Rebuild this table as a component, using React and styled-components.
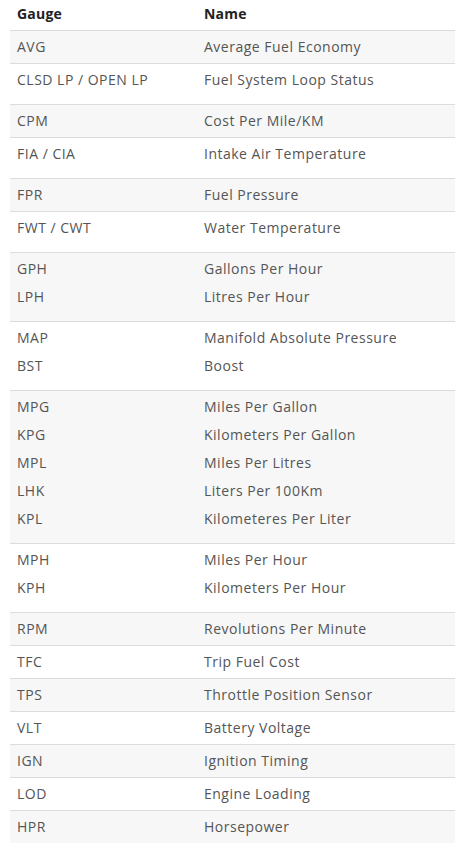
import React from 'react';
import styled, { createGlobalStyle } from 'styled-components';

const GlobalStyle = createGlobalStyle`
  body {
    margin: 0;
    background: #fff;
    font-family: "Open Sans", "Liberation Sans", sans-serif;
  }
`;

const rows = [
  { gauge: ['AVG'], name: ['Average Fuel Economy'] },
  { gauge: ['CLSD LP / OPEN LP'], name: ['Fuel System Loop Status'], para: true },
  { gauge: ['CPM'], name: ['Cost Per Mile/KM'] },
  { gauge: ['FIA / CIA'], name: ['Intake Air Temperature'], para: true },
  { gauge: ['FPR'], name: ['Fuel Pressure'] },
  { gauge: ['FWT / CWT'], name: ['Water Temperature'], para: true },
  { gauge: ['GPH', 'LPH'], name: ['Gallons Per Hour', 'Litres Per Hour'], para: true },
  { gauge: ['MAP', 'BST'], name: ['Manifold Absolute Pressure', 'Boost'], para: true },
  {
    gauge: ['MPG', 'KPG', 'MPL', 'LHK', 'KPL'],
    name: ['Miles Per Gallon', 'Kilometers Per Gallon', 'Miles Per Litres', 'Liters Per 100Km', 'Kilometeres Per Liter'],
    para: true,
  },
  { gauge: ['MPH', 'KPH'], name: ['Miles Per Hour', 'Kilometers Per Hour'], para: true },
  { gauge: ['RPM'], name: ['Revolutions Per Minute'] },
  { gauge: ['TFC'], name: ['Trip Fuel Cost'] },
  { gauge: ['TPS'], name: ['Throttle Position Sensor'] },
  { gauge: ['VLT'], name: ['Battery Voltage'] },
  { gauge: ['IGN'], name: ['Ignition Timing'] },
  { gauge: ['LOD'], name: ['Engine Loading'] },
  { gauge: ['HPR'], name: ['Horsepower'] },
];

function Cell({ lines, para }) {
  if (!para) return <Td>{lines[0]}</Td>;
  return (
    <Td>
      {lines.map((l) => (
        <Line key={l}>{l}</Line>
      ))}
    </Td>
  );
}

export default function App() {
  return (
    <>
      <GlobalStyle />
      <Wrap>
        <Table>
          <thead>
            <tr>
              <Th>Gauge</Th>
              <Th>Name</Th>
            </tr>
          </thead>
          <tbody>
            {rows.map((r, i) => (
              <Tr key={r.gauge[0]} $striped={i % 2 === 0}>
                <Cell lines={r.gauge} para={r.para} />
                <Cell lines={r.name} para={r.para} />
              </Tr>
            ))}
          </tbody>
        </Table>
      </Wrap>
    </>
  );
}

const Wrap = styled.div`
  padding: 0 8px 0 10px;
`;

const Table = styled.table`
  width: 100%;
  border-collapse: collapse;
  table-layout: fixed;
  font-size: 14px;
  letter-spacing: 0.5px;
  color: #555;
`;

const Th = styled.th`
  text-align: left;
  font-weight: 700;
  color: #222;
  letter-spacing: 0.2px;
  padding: 4px 7px 6px 7px;
  height: 20px;
  line-height: 20px;
  border-bottom: 1px solid #dcdcdc;
  &:first-child { width: 173px; }
`;

const Tr = styled.tr`
  background: ${(p) => (p.$striped ? '#f7f7f7' : '#fff')};
  border-bottom: 1px solid #dcdcdc;
  &:last-child { border-bottom: none; }
`;

const Td = styled.td`
  vertical-align: top;
  padding: 6px 7px 6px 7px;
  line-height: 20px;
`;

const Line = styled.p`
  margin: 0 0 8px 0;
`;
